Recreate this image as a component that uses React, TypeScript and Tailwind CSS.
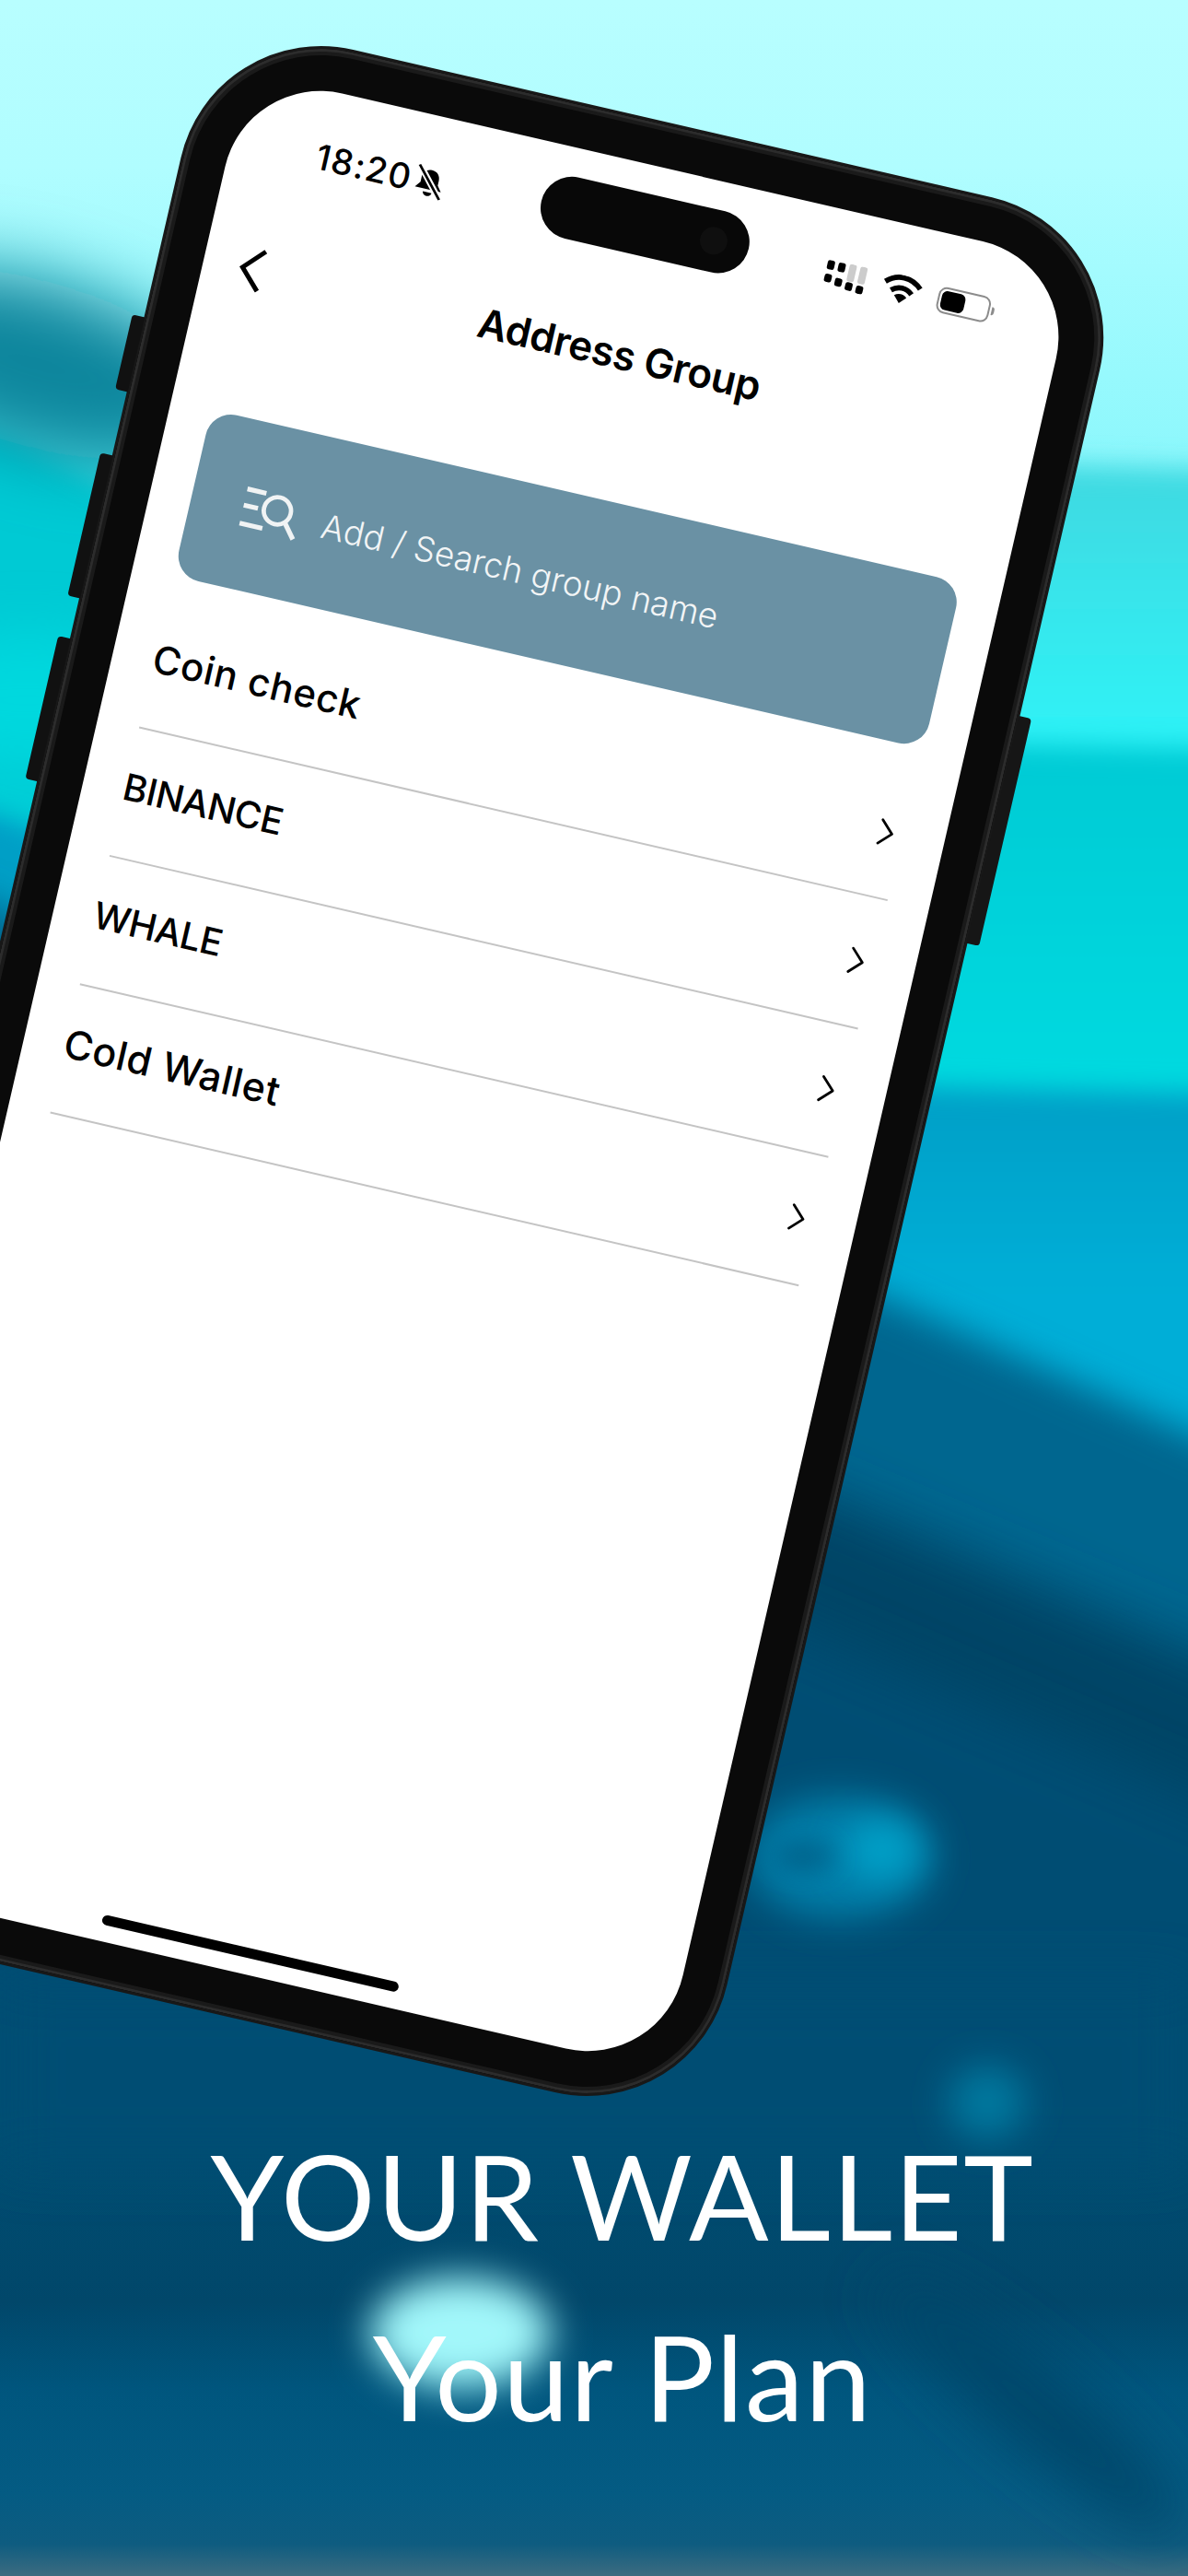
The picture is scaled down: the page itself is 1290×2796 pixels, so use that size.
import { ChevronRight } from "lucide-react";

const sans = "font-['Inter','Noto_Sans',sans-serif]";

const groups = [
  { name: "Coin check", cls: "text-[42px] tracking-[0.6px]" },
  { name: "BINANCE", cls: "text-[40px] tracking-[-0.4px]" },
  { name: "WHALE", cls: "text-[40px] tracking-[-0.6px]" },
  { name: "Cold Wallet", cls: "text-[43px] tracking-[0.6px]" },
];

// wallpaper bands: top edge as x,y points, then closed off below the page
const bands = [
  { edge: "-400,310 0,390 500,450 1000,500 1700,520", fill: "url(#b1)", filter: "url(#f14)" },
  { edge: "-400,400 0,470 300,620 1000,805 1700,822", fill: "url(#b2)", filter: "url(#f14)" },
  { edge: "-400,800 0,885 500,1080 1000,1180 1700,1196", fill: "url(#b3)", filter: "url(#f14)" },
  { edge: "-400,810 1700,1735", fill: "#01668f", filter: "url(#f20)" },
  { edge: "-400,1080 1700,1960", fill: "#004466", filter: "url(#f30)" },
  { edge: "-400,1230 1700,2120", fill: "#004e73", filter: "url(#f30)" },
];

const Backdrop = () => (
  <svg className="absolute inset-0" width="1290" height="2796" viewBox="0 0 1290 2796">
    <defs>
      <linearGradient id="sky" x1="0" y1="0" x2="0" y2="520" gradientUnits="userSpaceOnUse">
        <stop offset="0" stopColor="#b8feff" />
        <stop offset="0.35" stopColor="#b0fdff" />
        <stop offset="1" stopColor="#8af7fc" />
      </linearGradient>
      <linearGradient id="b1" x1="0" y1="500" x2="0" y2="800" gradientUnits="userSpaceOnUse">
        <stop offset="0" stopColor="#40d8e0" />
        <stop offset="1" stopColor="#2ef2f6" />
      </linearGradient>
      <linearGradient id="b2" x1="0" y1="800" x2="0" y2="1150" gradientUnits="userSpaceOnUse">
        <stop offset="0" stopColor="#00cad4" />
        <stop offset="1" stopColor="#00d9df" />
      </linearGradient>
      <linearGradient id="b3" x1="0" y1="1180" x2="0" y2="1400" gradientUnits="userSpaceOnUse">
        <stop offset="0" stopColor="#009fc6" />
        <stop offset="1" stopColor="#00aed7" />
      </linearGradient>
      <linearGradient id="floor" x1="0" y1="2300" x2="0" y2="2796" gradientUnits="userSpaceOnUse">
        <stop offset="0" stopColor="#004e73" />
        <stop offset="0.4" stopColor="#01476a" />
        <stop offset="0.6" stopColor="#00567e" />
        <stop offset="0.82" stopColor="#045b83" />
        <stop offset="0.93" stopColor="#0e5c80" />
        <stop offset="1" stopColor="#3d6c80" />
      </linearGradient>
      <filter id="f14" filterUnits="userSpaceOnUse" x="-400" y="-400" width="2100" height="3700">
        <feGaussianBlur stdDeviation="14" />
      </filter>
      <filter id="f20" filterUnits="userSpaceOnUse" x="-400" y="-400" width="2100" height="3700">
        <feGaussianBlur stdDeviation="20" />
      </filter>
      <filter id="f30" filterUnits="userSpaceOnUse" x="-400" y="-400" width="2100" height="3700">
        <feGaussianBlur stdDeviation="30" />
      </filter>
      <filter id="f40" filterUnits="userSpaceOnUse" x="-400" y="-400" width="2100" height="3700">
        <feGaussianBlur stdDeviation="40" />
      </filter>
    </defs>
    <rect width="1290" height="2796" fill="url(#sky)" />
    {bands.map((b) => (
      <polygon key={b.edge} points={`${b.edge} 1700,3300 -400,3300`} fill={b.fill} filter={b.filter} />
    ))}
    <ellipse cx="30" cy="760" rx="170" ry="70" fill="#00d8de" filter="url(#f30)" />
    <ellipse cx="40" cy="395" rx="200" ry="90" fill="#08859c" filter="url(#f40)" transform="rotate(16 40 395)" />
    <rect y="2300" width="1290" height="496" fill="url(#floor)" />
    <rect y="2150" width="1290" height="200" fill="#004e73" filter="url(#f30)" />
    <ellipse cx="1120" cy="2610" rx="210" ry="42" fill="#03466a" filter="url(#f30)" transform="rotate(40 1120 2610)" />
    <ellipse cx="912" cy="2016" rx="100" ry="66" fill="#007ea9" filter="url(#f20)" />
    <ellipse cx="958" cy="2008" rx="40" ry="32" fill="#00a2c9" filter="url(#f20)" />
    <ellipse cx="872" cy="2015" rx="34" ry="16" fill="#00628b" filter="url(#f14)" />
    <ellipse cx="1072" cy="2282" rx="42" ry="40" fill="#04789f" filter="url(#f20)" />
    <ellipse cx="500" cy="2532" rx="98" ry="60" fill="#a2f7fa" filter="url(#f20)" />
  </svg>
);

const SignalIcon = () => (
  <svg width="46" height="30" viewBox="0 0 46 30">
    <rect x="1" y="1" width="8" height="10" rx="2.5" fill="#000" />
    <rect x="13" y="1" width="8" height="10" rx="2.5" fill="#000" />
    <rect x="25" y="0" width="8" height="19" rx="2.5" fill="#ccc" />
    <rect x="37" y="0" width="8" height="19" rx="2.5" fill="#ccc" />
    <rect x="1" y="16" width="8" height="9" rx="2.5" fill="#000" />
    <rect x="13" y="18" width="8" height="9" rx="2.5" fill="#000" />
    <rect x="25" y="20" width="8" height="9" rx="2.5" fill="#000" />
    <rect x="37" y="21" width="8" height="9" rx="2.5" fill="#000" />
  </svg>
);

const WifiIcon = () => (
  <svg width="44" height="32" viewBox="0 0 38 28">
    <path d="M2 9.5C12 0 26 0 36 9.5" fill="none" stroke="#000" strokeWidth="5" />
    <path d="M9 16.5C15 11 23 11 29 16.5" fill="none" stroke="#000" strokeWidth="5" />
    <path d="M13 20.5C16.5 17.5 21.5 17.5 25 20.5L19 27Z" fill="#000" />
  </svg>
);

const BatteryIcon = () => (
  <div className="flex items-center">
    <div className="w-[58px] h-[29px] rounded-[9px] border-2 border-[#8c8c8c] p-[2px]">
      <div className="w-[26px] h-full rounded-[6px] bg-black" />
    </div>
    <div className="w-[3px] h-[9px] ml-[2px] rounded-r-full bg-[#8c8c8c]" />
  </div>
);

const MutedBell = () => (
  <svg width="36" height="36" viewBox="0 0 30 34" preserveAspectRatio="none">
    <path d="M15 4c5 0 8 4 8 9v5l4 6H3l4-6v-5c0-5 3-9 8-9z" fill="#000" />
    <path d="M11 27h8a4 4 0 0 1-8 0z" fill="#000" />
    <path d="M4 2l23 30" stroke="#fff" strokeWidth="6" />
    <path d="M3 1l24 31" stroke="#000" strokeWidth="2.4" />
  </svg>
);

const SearchGlyph = () => (
  <svg width="66" height="55" viewBox="0 0 62 52" fill="none" stroke="#f0f3f4">
    <path d="M2 6h20M2 23h15M2 42h24" strokeWidth="5" />
    <circle cx="37" cy="21" r="14" strokeWidth="4.5" />
    <path d="M47 31l12 15" strokeWidth="5" />
  </svg>
);

const App = () => (
  <div className="relative w-[1290px] h-[2796px] overflow-hidden">
    <Backdrop />

    <div className="relative flex flex-col">
      {/* Phone */}
      <div className="relative w-[1024px] h-[2111px] ml-[-19px] mt-[107px] rotate-[13deg] rounded-[156px] bg-[#0a0a0a] border-[3px] border-[#181818] p-[46px] shadow-[inset_0_0_0_3px_#2c2c2c,inset_0_0_0_7px_#1a1a1a]">
        <div className="absolute left-[-16px] top-[331px] w-[14px] h-[83px] rounded-l-[4px] bg-[#111]" />
        <div className="absolute left-[-16px] top-[485px] w-[14px] h-[159px] rounded-l-[4px] bg-[#111]" />
        <div className="absolute left-[-16px] top-[689px] w-[14px] h-[159px] rounded-l-[4px] bg-[#111]" />
        <div className="absolute right-[-16px] top-[539px] w-[14px] h-[253px] rounded-r-[4px] bg-[#161616]" />

        {/* Screen */}
        <div className={`relative flex flex-col h-full rounded-[106px] bg-white overflow-hidden ${sans}`}>
          <div className="absolute left-[343px] top-[31px] flex justify-end items-center w-[231px] h-[68px] pr-[24px] rounded-full bg-[#080808]">
            <div className="w-[30px] h-[30px] rounded-full bg-[#0f0f0f]" />
          </div>

          {/* Status bar */}
          <div className="flex items-center h-[40px] mt-[51px] pl-[94px] pr-[77px] shrink-0">
            <span className="mt-[2px] text-[38px] leading-none font-medium text-black tracking-[1.4px]">18:20</span>
            <div className="ml-[2px] mt-[4px]">
              <MutedBell />
            </div>
            <div className="flex items-center gap-[18px] ml-auto">
              <SignalIcon />
              <WifiIcon />
              <BatteryIcon />
            </div>
          </div>

          {/* Header */}
          <div className="relative flex items-center justify-center h-[60px] mt-[87px] shrink-0">
            <svg className="absolute left-[39px] top-[6px]" width="28" height="48" viewBox="0 0 28 48" fill="none">
              <path d="M25 2L4 24l21 22" stroke="#000" strokeWidth="5" />
            </svg>
            <h1 className="text-[44px] leading-none font-semibold text-black tracking-[-0.4px]">Address Group</h1>
          </div>

          {/* Search */}
          <div className="flex items-center h-[185px] mt-[128px] ml-[45px] mr-[45px] pl-[55px] rounded-[28px] bg-[#6a91a4] shrink-0">
            <div className="mt-[8px]">
              <SearchGlyph />
            </div>
            <span className="ml-[24px] mt-[6px] text-[37px] font-light text-[#f2f5f6]">Add / Search group name</span>
          </div>

          {/* Groups */}
          <ul className="flex flex-col mt-[27px] mx-[46px]">
            {groups.map((g) => (
              <li key={g.name} className="flex items-center justify-between h-[143px] border-b-2 border-[#c4c4c4]">
                <span className={`pb-[12px] ml-[-2px] font-medium text-black ${g.cls}`}>{g.name}</span>
                <ChevronRight size={52} strokeWidth={1.3} color="#000" className="mr-[-8px]" />
              </li>
            ))}
          </ul>

          {/* Home indicator */}
          <div className="mt-auto mb-[18px] mx-auto w-[330px] h-[11px] rounded-full bg-black shrink-0" />
        </div>
      </div>

      {/* Caption */}
      <div className="flex flex-col items-center mt-[90px] pl-[62px] text-white font-['Lato',sans-serif]">
        <p className="text-[128px] leading-[150px] font-normal tracking-[1.6px]">YOUR WALLET</p>
        <p className="mt-[46px] text-[128px] leading-[150px] font-normal tracking-[1.6px]">Your Plan</p>
      </div>
    </div>
  </div>
);

export default App;
